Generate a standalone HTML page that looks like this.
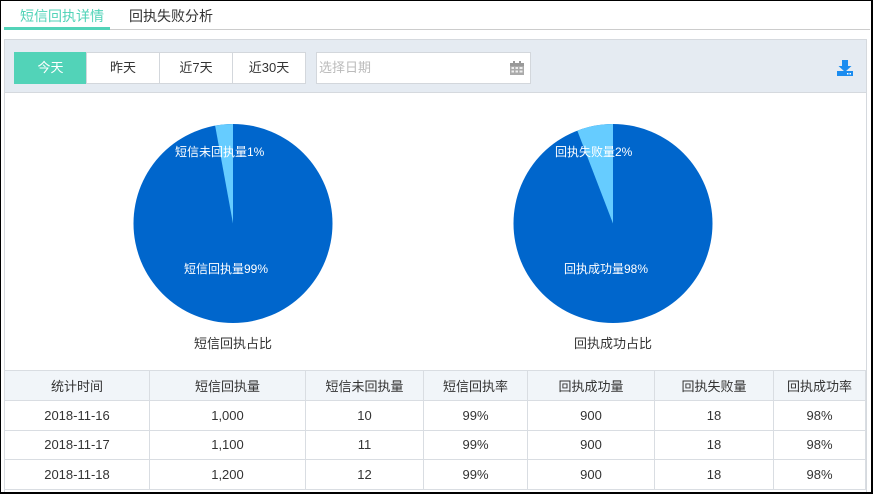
<!DOCTYPE html>
<html><head><meta charset="utf-8"><style>
*{box-sizing:border-box;margin:0;padding:0}
body{width:873px;height:494px;background:#fff;font-family:"Liberation Sans","Noto Sans CJK SC",sans-serif;font-size:13px;color:#333;position:relative;overflow:hidden}
.frame{position:absolute;left:0;top:0;width:873px;height:494px;border:1px solid #000;border-right:2px solid #000;border-bottom:2px solid #000}
.abs{position:absolute}
.tab{position:absolute;top:6px;font-size:14px}
.btn{position:absolute;top:52px;height:32px;border:1px solid #d3d7dc;background:#fff;text-align:center;line-height:30px;font-size:13px}
table{position:absolute;left:4px;top:370px;border-collapse:collapse;width:862px}
td{border:1px solid #d9dde2;height:29.5px;text-align:center;font-size:13px;color:#333}
tr.h td{background:#f1f5f9;height:30px}
</style></head><body>
<div class="tab" style="left:20px;color:#52d3b8">短信回执详情</div>
<div class="tab" style="left:129px;color:#333">回执失败分析</div>
<div class="abs" style="left:4px;top:29px;width:866px;height:1px;background:#ccc"></div>
<div class="abs" style="left:4px;top:27px;width:106px;height:3px;background:#52d3b8"></div>
<div class="abs" style="left:4px;top:39px;width:863px;height:455px;border:1px solid #d5d9de;border-bottom:none"></div>
<div class="abs" style="left:5px;top:40px;width:861px;height:53px;background:#e5ebf2;border-bottom:1px solid #d5d9de"></div>
<div class="btn" style="left:14px;width:73px;background:#52d3b8;border-color:#52d3b8;color:#fff">今天</div>
<div class="btn" style="left:86px;width:74px">昨天</div>
<div class="btn" style="left:159px;width:74px">近7天</div>
<div class="btn" style="left:232px;width:74px">近30天</div>
<div class="btn" style="left:316px;width:215px;text-align:left;padding-left:2px;color:#bbb">选择日期</div>
<svg class="abs" style="left:509px;top:60px" width="16" height="16" viewBox="0 0 16 16"><rect x="1" y="3" width="14" height="12" fill="#aaa"/><rect x="1" y="3" width="14" height="3" fill="#999"/><rect x="4" y="1" width="2" height="4" fill="#999"/><rect x="10" y="1" width="2" height="4" fill="#999"/><g fill="#eee"><rect x="2.5" y="7" width="2.5" height="2"/><rect x="6.5" y="7" width="2.5" height="2"/><rect x="10.5" y="7" width="3" height="2"/><rect x="2.5" y="10.5" width="2.5" height="2"/><rect x="6.5" y="10.5" width="2.5" height="2"/><rect x="10.5" y="10.5" width="3" height="2"/></g></svg>
<svg class="abs" style="left:836px;top:59px" width="18" height="18" viewBox="0 0 18 18"><path d="M6 1h6v6h3.5L9 13 2.5 7H6z" fill="#1a8cf0"/><rect x="1" y="12" width="16" height="5" fill="#1a8cf0"/><rect x="11" y="14" width="1.5" height="1.5" fill="#fff"/><rect x="13.5" y="14" width="1.5" height="1.5" fill="#fff"/></svg>
<svg class="abs" style="left:0;top:0" width="873" height="370">
<circle cx="233" cy="223.5" r="99.5" fill="#0066cc"/>
<path d="M233 223.5 L233 124 A99.5 99.5 0 0 0 215.1 125.6 Z" fill="#66ccff"/>
<circle cx="613" cy="223.5" r="99.5" fill="#0066cc"/>
<path d="M613 223.5 L613 124 A99.5 99.5 0 0 0 577.3 130.6 Z" fill="#66ccff"/>
<g font-family="Liberation Sans,Noto Sans CJK SC,sans-serif" font-size="12" fill="#fff">
<text x="175" y="156">短信未回执量1%</text>
<text x="184" y="273">短信回执量99%</text>
<text x="555" y="156">回执失败量2%</text>
<text x="564" y="273">回执成功量98%</text>
</g>
<g font-family="Liberation Sans,Noto Sans CJK SC,sans-serif" font-size="13" fill="#333" text-anchor="middle">
<text x="233" y="348">短信回执占比</text>
<text x="613" y="348">回执成功占比</text>
</g>
</svg>
<table>
<colgroup><col style="width:145px"><col style="width:156px"><col style="width:118px"><col style="width:104px"><col style="width:127px"><col style="width:119px"><col></colgroup>
<tr class="h"><td>统计时间</td><td>短信回执量</td><td>短信未回执量</td><td>短信回执率</td><td>回执成功量</td><td>回执失败量</td><td>回执成功率</td></tr>
<tr><td>2018-11-16</td><td>1,000</td><td>10</td><td>99%</td><td>900</td><td>18</td><td>98%</td></tr>
<tr><td>2018-11-17</td><td>1,100</td><td>11</td><td>99%</td><td>900</td><td>18</td><td>98%</td></tr>
<tr><td>2018-11-18</td><td>1,200</td><td>12</td><td>99%</td><td>900</td><td>18</td><td>98%</td></tr>
</table>
<div class="frame"></div>
</body></html>
